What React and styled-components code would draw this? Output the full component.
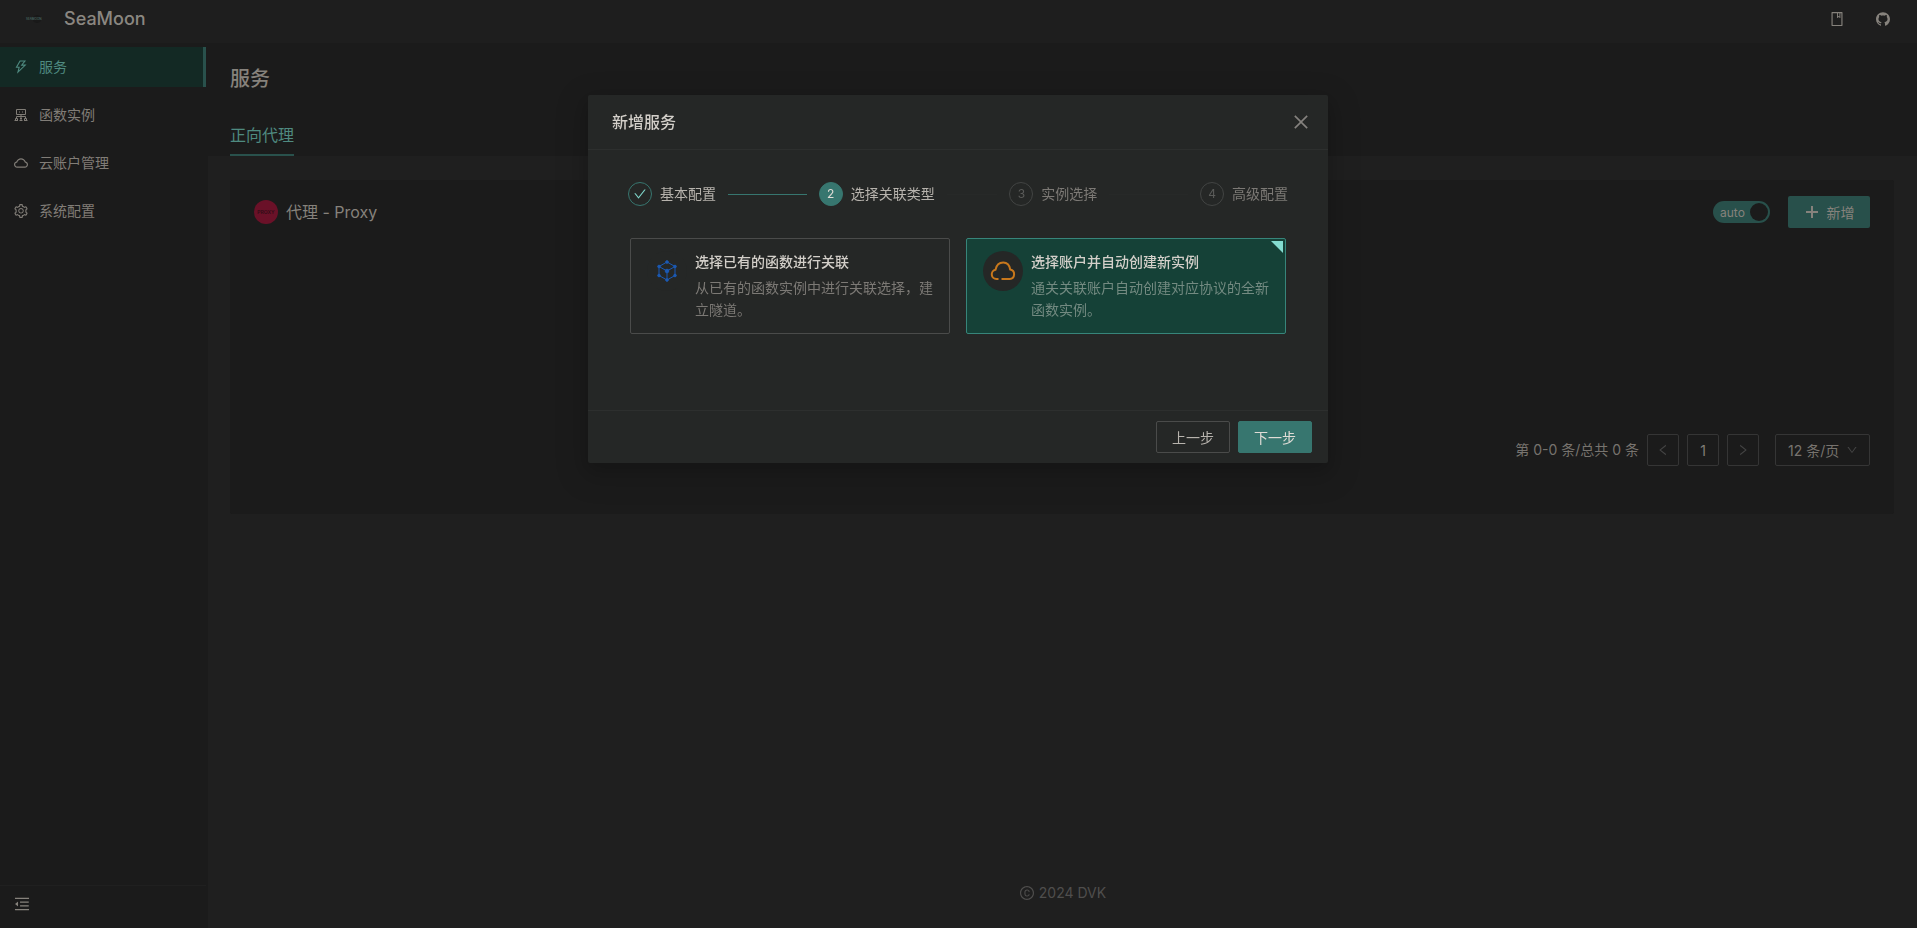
import React from 'react'
import styled, { createGlobalStyle } from 'styled-components'
import {
    AiOutlineThunderbolt,
    AiOutlineCloud,
    AiOutlineSetting,
    AiOutlineClose,
    AiOutlineCheck,
    AiOutlineLeft,
    AiOutlineRight,
    AiOutlineDown,
    AiOutlineBook,
    AiOutlineGithub,
    AiOutlineCopyright,
    AiOutlineMenuFold
} from 'react-icons/ai'

const MENU = [
    { label: '服务', icon: <AiOutlineThunderbolt />, active: true },
    { label: '函数实例', icon: <FunctionIcon /> },
    { label: '云账户管理', icon: <AiOutlineCloud /> },
    { label: '系统配置', icon: <AiOutlineSetting /> }
]

const STEPS = [
    { title: '基本配置', status: 'finish' },
    { title: '选择关联类型', status: 'process' },
    { title: '实例选择', status: 'wait' },
    { title: '高级配置', status: 'wait' }
]

const TYPES = [
    {
        id: 'exist',
        title: '选择已有的函数进行关联',
        description: '从已有的函数实例中进行关联选择，建立隧道。',
        icon: <CubeIcon />
    },
    {
        id: 'auto',
        title: '选择账户并自动创建新实例',
        description: '通关关联账户自动创建对应协议的全新函数实例。',
        icon: <CloudIcon />
    }
]

function FunctionIcon() {
    return (
        <svg viewBox="0 0 16 16" fill="none" stroke="currentColor">
            <path d="M3.5 2.500h9v5h-9zM6 5h1M9 5h1M8 7.500V14M3.500 11V9.500h9V11" />
            <path d="M2.500 14V11.500h2V14M7 11.500h2M11.500 14V11.500h2V14M1.500 13.500h3M6.500 13.500h3M11.500 13.500h3" />
        </svg>
    )
}

function PlusIcon() {
    return (
        <svg viewBox="0 0 16 16" fill="none" stroke="currentColor" strokeWidth="2">
            <path d="M8 2v12M2 8h12" />
        </svg>
    )
}

function CubeIcon() {
    return (
        <svg width="20" height="22" viewBox="0 0 20 22" fill="#1b59b3" stroke="#1b59b3">
            <path d="M10 2L18 6.500V15.500L10 20L2 15.500V6.500zM2 6.500L10 11L18 6.500M10 11V20" fill="none" />
            <circle cx="10" cy="2" r="1.300" />
            <circle cx="18" cy="6.500" r="1.300" />
            <circle cx="18" cy="15.500" r="1.300" />
            <circle cx="10" cy="20" r="1.300" />
            <circle cx="2" cy="15.500" r="1.300" />
            <circle cx="2" cy="6.500" r="1.300" />
            <circle cx="10" cy="11" r="1.800" />
        </svg>
    )
}

function CloudIcon() {
    return (
        <svg width="26" height="20" viewBox="0 0 26 20" fill="none" stroke="#c8781c" strokeWidth="2">
            <path d="M8.500 18H6.500a4.700 4.700 0 0 1-1-9.300C6.500 4 9.500 1.500 13.200 1.500S19.500 4 20.200 8.500a4.800 4.800 0 0 1-.5 9.500H11.500" />
        </svg>
    )
}

const App = () => {
    const [type, setType] = React.useState('auto')

    return (
        <>
            <GlobalStyle />
            <Page>
                <Header>
                    <Brand href="#">
                        <Logo viewBox="0 0 28 14">
                            <circle cx="17" cy="7" r="4" fill="#191919" />
                            <text x="6" y="8" fontSize="3" fill="#4d6f69">SEAMOON</text>
                        </Logo>
                        SeaMoon
                    </Brand>
                    <Actions>
                        <a href="#docs" aria-label="docs"><AiOutlineBook /></a>
                        <a href="#github" aria-label="github"><AiOutlineGithub /></a>
                    </Actions>
                </Header>

                <Body>
                    <Sider>
                        <nav>
                            {MENU.map(item => (
                                <MenuItem key={item.label} href="#" $active={item.active}>
                                    {item.icon}
                                    {item.label}
                                </MenuItem>
                            ))}
                        </nav>
                        <Collapse type="button" aria-label="collapse"><AiOutlineMenuFold /></Collapse>
                    </Sider>

                    <Main>
                        <PageHeader>
                            <h1>服务</h1>
                            <Tab type="button">正向代理</Tab>
                        </PageHeader>

                        <Card>
                            <CardHeader>
                                <Avatar viewBox="0 0 24 24">
                                    <circle cx="12" cy="12" r="12" fill="#6a1128" />
                                    <text x="12" y="14" fontSize="5" fontWeight="600" textAnchor="middle" fill="#2f0d16">PROXY</text>
                                </Avatar>
                                <h2>代理 - Proxy</h2>
                                <Switch type="button" role="switch" aria-checked="true">auto<i /></Switch>
                                <AddButton type="button"><PlusIcon />新增</AddButton>
                            </CardHeader>
                            <Pagination>
                                <span>第 0-0 条/总共 0 条</span>
                                <PageButton type="button" disabled aria-label="prev"><AiOutlineLeft /></PageButton>
                                <PageButton type="button" $current>1</PageButton>
                                <PageButton type="button" disabled aria-label="next"><AiOutlineRight /></PageButton>
                                <PageSize>
                                    <select aria-label="page size">
                                        <option>12 条/页</option>
                                    </select>
                                    <AiOutlineDown />
                                </PageSize>
                            </Pagination>
                        </Card>

                        <Footer><AiOutlineCopyright />2024 DVK</Footer>
                    </Main>
                </Body>
            </Page>

            <Overlay>
                <Modal role="dialog" aria-label="新增服务">
                    <ModalHeader>
                        <h3>新增服务</h3>
                        <CloseButton type="button" aria-label="close"><AiOutlineClose /></CloseButton>
                    </ModalHeader>
                    <ModalBody>
                        <Steps>
                            {STEPS.map((step, i) => (
                                <Step key={step.title} $status={step.status}>
                                    <b>{step.status === 'finish' ? <AiOutlineCheck /> : i + 1}</b>
                                    <span>{step.title}</span>
                                </Step>
                            ))}
                        </Steps>
                        <TypeList>
                            {TYPES.map(item => (
                                <TypeCard key={item.id} $checked={type === item.id}>
                                    <input
                                        type="radio"
                                        name="type"
                                        checked={type === item.id}
                                        onChange={() => setType(item.id)}
                                    />
                                    <TypeIcon>{item.icon}</TypeIcon>
                                    <div>
                                        <strong>{item.title}</strong>
                                        <p>{item.description}</p>
                                    </div>
                                </TypeCard>
                            ))}
                        </TypeList>
                    </ModalBody>
                    <ModalFooter>
                        <ModalButton type="button">上一步</ModalButton>
                        <ModalButton type="button" $primary>下一步</ModalButton>
                    </ModalFooter>
                </Modal>
            </Overlay>
        </>
    )
}

export default App

const GlobalStyle = createGlobalStyle`
    * {
        box-sizing : border-box;
    }

    body {
        margin      : 0;
        background  : #1f1f1f;
        color       : #86827c;
        font-family : Inter, "Noto Sans CJK SC", sans-serif;
        font-size   : 14px;
        line-height : 22px;
    }

    h1, h2, h3, p {
        margin : 0;
    }

    a {
        color           : inherit;
        text-decoration : none;
    }

    button, select {
        padding     : 0;
        border      : 0;
        background  : none;
        color       : inherit;
        font-family : inherit;
        font-size   : 14px;
        cursor      : pointer;
    }
`

const Page = styled.div`
    display        : flex;
    flex-direction : column;
    min-height     : 100vh;
`

const Header = styled.header`
    display         : flex;
    align-items     : center;
    justify-content : space-between;
    height          : 43px;
    padding         : 0 26px 5px 20px;
    background      : #1e1e1e;
`

const Brand = styled.a`
    display     : flex;
    align-items : center;
    gap         : 16px;
    color       : #8b8781;
    font-size   : 18px;
    font-weight : 500;
`

const Logo = styled.svg`
    width  : 28px;
    height : 14px;
`

const Actions = styled.div`
    display : flex;
    gap     : 30px;

    a {
        display   : flex;
        font-size : 16px;
    }
`

const Body = styled.div`
    display : flex;
    flex    : 1;
`

const Sider = styled.aside`
    display         : flex;
    flex-direction  : column;
    justify-content : space-between;
    width           : 208px;
    padding         : 4px 2px 0 0;
    background      : #1b1b1b;
`

const MenuItem = styled.a`
    display       : flex;
    align-items   : center;
    gap           : 10px;
    height        : 40px;
    margin-bottom : 8px;
    padding-left  : 13px;
    border-right  : 3px solid ${p => (p.$active ? '#29514c' : 'transparent')};
    background    : ${p => (p.$active ? '#132924' : 'transparent')};
    color         : ${p => (p.$active ? '#4f8a80' : '#817d77')};

    svg {
        width  : 16px;
        height : 16px;
    }
`

const Collapse = styled.button`
    display     : flex;
    align-items : center;
    height      : 43px;
    padding     : 0 13px 6px;
    border-top  : 1px solid #202020;

    svg {
        width  : 18px;
        height : 18px;
    }
`

const Main = styled.main`
    display        : flex;
    flex           : 1;
    flex-direction : column;
`

const PageHeader = styled.div`
    padding    : 20px 22px 0;
    background : #1b1b1b;

    h1 {
        color       : #86827c;
        font-size   : 20px;
        font-weight : 500;
        line-height : 32px;
    }
`

const Tab = styled.button`
    display       : block;
    height        : 45px;
    margin-top    : 16px;
    padding-top   : 2px;
    border-bottom : 2px solid #29514c;
    color         : #4f8a80;
    font-size     : 16px;
`

const Card = styled.section`
    margin        : 24px 23px 0 22px;
    padding       : 16px 24px 48px;
    border-radius : 2px;
    background    : #1b1b1b;
`

const CardHeader = styled.div`
    display       : flex;
    align-items   : center;
    margin-bottom : 206px;

    h2 {
        flex        : 1;
        color       : #86827c;
        font-size   : 16px;
        font-weight : 400;
    }
`

const Avatar = styled.svg`
    width        : 24px;
    height       : 24px;
    margin-right : 8px;
`

const Switch = styled.button`
    display         : flex;
    align-items     : center;
    justify-content : space-between;
    width           : 57px;
    height          : 22px;
    margin-right    : 18px;
    padding         : 0 2px 0 7px;
    border-radius   : 11px;
    background      : #28504b;
    font-size       : 12px;

    i {
        width         : 18px;
        height        : 18px;
        border-radius : 50%;
        background    : #1b1b1b;
    }
`

const AddButton = styled.button`
    display         : flex;
    align-items     : center;
    justify-content : center;
    gap             : 7px;
    width           : 82px;
    height          : 32px;
    border-radius   : 2px;
    background      : #28504b;

    svg {
        width  : 16px;
        height : 16px;
    }
`

const Pagination = styled.div`
    display         : flex;
    align-items     : center;
    justify-content : flex-end;
    gap             : 8px;
    color           : #77736e;
`

const PageButton = styled.button`
    display         : flex;
    align-items     : center;
    justify-content : center;
    width           : 32px;
    height          : 32px;
    border          : 1px solid #353535;
    border-radius   : 2px;
    color           : ${p => (p.$current ? '#817d77' : '#444444')};

    svg {
        width  : 14px;
        height : 14px;
    }
`

const PageSize = styled.div`
    display       : flex;
    align-items   : center;
    height        : 32px;
    margin-left   : 8px;
    padding       : 0 11px 0 12px;
    border        : 1px solid #353535;
    border-radius : 2px;

    select {
        width      : 58px;
        appearance : none;
    }

    svg {
        width  : 12px;
        height : 12px;
        color  : #444444;
    }
`

const Footer = styled.footer`
    display         : flex;
    align-items     : center;
    justify-content : center;
    gap             : 4px;
    margin          : auto 0 24px;
    color           : #4f4e4d;

    svg {
        width  : 16px;
        height : 16px;
    }
`

const Overlay = styled.div`
    position        : fixed;
    inset           : 0;
    display         : flex;
    align-items     : flex-start;
    justify-content : center;
    padding         : 95px 1px 0 0;
`

const Modal = styled.div`
    width         : 740px;
    border-radius : 2px;
    background    : #252726;
    box-shadow    : 0 6px 16px rgba(0, 0, 0, 0.12), 0 9px 28px 8px rgba(0, 0, 0, 0.12);
`

const ModalHeader = styled.div`
    display         : flex;
    align-items     : center;
    justify-content : space-between;
    height          : 55px;
    padding         : 0 17px 0 24px;
    border-bottom   : 1px solid #2d2f2e;

    h3 {
        color       : #d3cfc9;
        font-size   : 16px;
        font-weight : 500;
    }
`

const CloseButton = styled.button`
    display : flex;
    color   : #85827e;

    svg {
        width  : 20px;
        height : 20px;
    }
`

const ModalBody = styled.div`
    padding : 32px 40px 76px;
`

const Steps = styled.ol`
    display    : flex;
    margin     : 0 0 32px;
    padding    : 0;
    list-style : none;
`

const stepColors = {
    finish: { border: '#37766f', bg: 'transparent', icon: '#7fd6ca', text: '#b7b3ad', line: '#37766f' },
    process: { border: '#37766f', bg: '#37766f', icon: '#e0dcd6', text: '#b7b3ad', line: '#272928' },
    wait: { border: '#424443', bg: 'transparent', icon: '#5a5b59', text: '#7c7975', line: '#272928' }
}

const Step = styled.li`
    display     : flex;
    align-items : center;
    flex        : 1;
    color       : ${p => stepColors[p.$status].text};

    b {
        display         : flex;
        align-items     : center;
        justify-content : center;
        width           : 24px;
        height          : 24px;
        margin-right    : 8px;
        border          : 1px solid ${p => stepColors[p.$status].border};
        border-radius   : 50%;
        background      : ${p => stepColors[p.$status].bg};
        color           : ${p => stepColors[p.$status].icon};
        font-size       : 12px;
        font-weight     : 400;

        svg {
            width  : 14px;
            height : 14px;
        }
    }

    &::after {
        content    : "";
        flex       : 1;
        height     : 1px;
        margin     : 0 12px;
        background : ${p => stepColors[p.$status].line};
    }

    &:last-child {
        flex : none;

        &::after {
            display : none;
        }
    }
`

const TypeList = styled.div`
    display               : grid;
    grid-template-columns : 1fr 1fr;
    gap                   : 16px;
    padding               : 0 2px;
`

const TypeCard = styled.label`
    position      : relative;
    display       : flex;
    gap           : 8px;
    padding       : 12px 16px;
    border        : 1px solid ${p => (p.$checked ? '#37857a' : '#4a4b4a')};
    border-radius : 2px;
    background    : ${p => (p.$checked ? '#154137' : 'transparent')};
    cursor        : pointer;

    input {
        position : absolute;
        opacity  : 0;
    }

    strong {
        display       : block;
        margin-bottom : 4px;
        color         : #d3cfc9;
        font-weight   : 500;
    }

    p {
        color : ${p => (p.$checked ? '#738a81' : '#7c7975')};
    }

    &::after {
        content             : "";
        display             : ${p => (p.$checked ? 'block' : 'none')};
        position            : absolute;
        top                 : 2px;
        right               : 2px;
        border              : 6px solid #84dcd0;
        border-left-color   : transparent;
        border-bottom-color : transparent;
    }
`

const TypeIcon = styled.span`
    display         : flex;
    flex            : none;
    align-items     : center;
    justify-content : center;
    width           : 40px;
    height          : 40px;
    border-radius   : 50%;
    background      : #252726;
`

const ModalFooter = styled.div`
    display         : flex;
    justify-content : flex-end;
    gap             : 8px;
    padding         : 10px 16px;
    border-top      : 1px solid #2d2f2e;
`

const ModalButton = styled.button`
    width         : 74px;
    height        : 32px;
    border        : 1px solid ${p => (p.$primary ? '#37766f' : '#4a4b4a')};
    border-radius : 2px;
    background    : ${p => (p.$primary ? '#37766f' : 'transparent')};
    color         : ${p => (p.$primary ? '#e0dcd6' : '#b7b3ad')};
`
